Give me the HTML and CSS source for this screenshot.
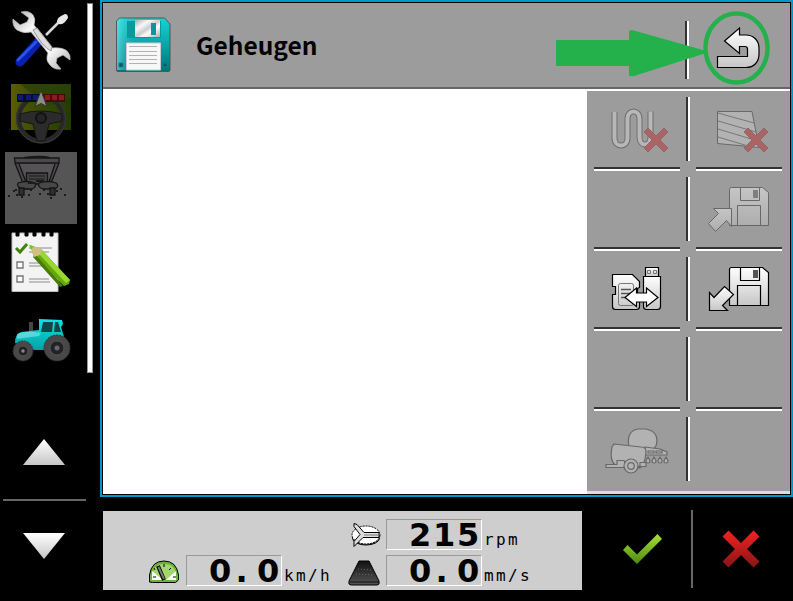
FILE: index.html
```html
<!DOCTYPE html>
<html lang="nl">
<head>
<meta charset="utf-8">
<title>Geheugen</title>
<link rel="stylesheet" href="styles.css">
</head>
<body>
<svg class="defs" width="0" height="0" aria-hidden="true">
  <defs>
    <linearGradient id="silver" x1="0" y1="0" x2="0" y2="1"><stop offset="0" stop-color="#fff"/><stop offset="1" stop-color="#c6c6c6"/></linearGradient>
    <linearGradient id="metal" x1="0" y1="0" x2="1" y2="1"><stop offset="0" stop-color="#aaa"/><stop offset=".3" stop-color="#f8f8f8"/><stop offset=".5" stop-color="#ccc"/><stop offset=".65" stop-color="#fff"/><stop offset="1" stop-color="#aaa"/></linearGradient>
    <linearGradient id="teal" x1="0" y1="0" x2="0" y2="1"><stop offset="0" stop-color="#16d3d6"/><stop offset="1" stop-color="#027478"/></linearGradient>
    <linearGradient id="body" x1="0" y1="0" x2="0" y2="1"><stop offset="0" stop-color="#05e6e6"/><stop offset="1" stop-color="#06a0a2"/></linearGradient>
    <linearGradient id="sheen" x1="0" y1="0" x2="1" y2="0"><stop offset="0" stop-color="#7ee" stop-opacity=".6"/><stop offset=".4" stop-color="#0aa" stop-opacity="0"/></linearGradient>
    <linearGradient id="green" x1="0" y1="0" x2="0" y2="1"><stop offset="0" stop-color="#a6e034"/><stop offset="1" stop-color="#4e8a10"/></linearGradient>
    <linearGradient id="red" x1="0" y1="0" x2="0" y2="1"><stop offset="0" stop-color="#f52222"/><stop offset="1" stop-color="#861515"/></linearGradient>
    <linearGradient id="field" x1="0" y1="0" x2="1" y2="0"><stop offset="0" stop-color="#5d5d02"/><stop offset=".3" stop-color="#435000"/><stop offset="1" stop-color="#223b00"/></linearGradient>
    <linearGradient id="belt" x1="0" y1="0" x2="0" y2="1"><stop offset="0" stop-color="#111"/><stop offset="1" stop-color="#555"/></linearGradient>
  </defs>
</svg>
<div class="terminal">
  <aside class="sidebar">
    <div class="apps">
      <nav class="app-list">
        <svg class="app" viewBox="5 0 72 72">
          <path d="M64 17 46 35" stroke="#d8d8d8" stroke-width="2.500"/>
          <path d="M57 22q0-4 4-6l4-2q3 0 3 4l-3 4q-3 3-6 2z" fill="#e8e8e8"/>
          <path d="M38 42 20 62" stroke="#0a1fac" stroke-width="9" stroke-linecap="round"/>
          <path d="M36 42 18 60" stroke="#2454ee" stroke-width="3" stroke-linecap="round"/>
          <path d="M21 12q8-2 12 3 3 4 1 10l18 23q10-1 15 3 4 4 3 9l-7-5-6 3-1 5 5 6q-7 1-11-4-5-5-2-12L31 32q-8 2-14-2-5-4-4-11l7 6 7-3 2-4z" fill="url(#metal)" stroke="#bbb" stroke-width=".7"/>
          <path d="m33 30 4-2 15 19-1 4q-8-4-18-21z" fill="#ddd" stroke="#999" stroke-width="1"/>
        </svg>
        <svg class="app" viewBox="5 76 72 72">
          <path d="M11 84h60v46H11z" fill="url(#field)"/>
          <path d="m20 84 28 22 23-8V84z" fill="#2c4108" opacity=".8"/>
          <circle cx="41" cy="118.500" r="22.500" fill="none" stroke="#282828" stroke-width="5"/>
          <circle cx="41" cy="118.500" r="24.500" fill="none" stroke="#3b3b3b" stroke-width="1"/>
          <path d="M20 114q20-6 42 0v7l-13 3-4 17h-8l-4-17-13-3z" fill="#2b2b2b" stroke="#151515"/>
          <circle cx="41" cy="118" r="5" fill="#242424" stroke="#111" stroke-width="2"/>
          <path d="M17 94h24v8H17z" fill="#050a35"/>
          <path d="M18 95h5v5h-5zm8 0h5v5h-5zm7 0h5v5h-5z" fill="#101a70"/>
          <path d="M41 94h24v8H41z" fill="#490707"/>
          <path d="M45 95h5v5h-5zm7 0h5v5h-5zm7 0h5v5h-5z" fill="#8a1a22"/>
          <path d="m41 90.500 6 16-6-3-6 3z" fill="#8a8a8a" stroke="#333"/>
        </svg>
        <svg class="app app--active" viewBox="5 152 72 72">
          <g stroke="#151515" stroke-width="1.300">
            <path d="M25 157.500q16-2 24 0v2H25z" fill="#333"/>
            <path d="M14.500 158H59v5l-8 20H23l-8-20z" fill="#4a484a"/>
            <path d="M15 163h44" /><path d="m19 164 7 18h23l6-18" fill="#555355"/>
            <path d="M26.500 173h21v11h-21z" fill="#454545"/>
            <path d="M29 176h16M29 179h16" stroke="#292929"/>
            <path d="M18 183q9-3 17 0 2 4-3 6H22q-6-3-4-6zm21 0q9-3 17 0 4 3-1 6H43q-6-2-4-6z" fill="#484848"/>
            <path d="M19 188h5v7h-5zm31 0h5v7h-5z" fill="#303030"/>
          </g>
          <path d="M28 182h7v2h-7zm8-2h8v2h-8zM8 195h2v2H8zm5-5h2v2h-2zm3 4h2v2h-2zm-1-5h2v2h-2zm11-1h2v2h-2zm2 6h2v2h-2zm2-5h2v2h-2zm9 4h2v2h-2zm4-4h2v2h-2zm4 4h2v2h-2zm9-3h2v2h-2zm4-2h2v2h-2zm4 6h2v2h-2zm-14 3h2v2h-2zm-29-1h2v2h-2z" fill="#1b1b1b"/>
        </svg>
        <svg class="app" viewBox="5 228 72 72">
          <path d="M12 233h46v58.500H12z" fill="#f3f3f3" stroke="#bbb"/>
          <path d="M16 232h3v4h-3zm9 0h3v4h-3zm8 0h3v4h-3zm9 0h3v4h-3zm8 0h3v4h-3z" fill="#000" stroke="#000"/>
          <path d="M29 248h23M29 252h20M29 263h20M29 266h20M29 279h20M29 282h21" stroke="#8c8c8c" stroke-width="1.200"/>
          <path d="M17 262h6v6h-6zm0 14h6v6h-6z" fill="#fff" stroke="#777" stroke-width="1.400"/>
          <path d="m16 248 4 4 7-8" fill="none" stroke="#41820b" stroke-width="3"/>
          <path d="m30 245 11 4 29 31-1 4-5 2-30-29z" fill="#66a80c"/>
          <path d="m41 249 29 31-4 3-28-30z" fill="#99d832"/>
          <path d="m33 257 2-3 28 32-3 1z" fill="#477c08"/>
          <path d="m30 245 12 4-2 6-6 2z" fill="#d2bd83"/><path d="m29 245 5 1.500-3 3z" fill="#56d51b"/>
        </svg>
        <svg class="app" viewBox="5 304 72 72">
          <path d="M29 322h4v10h-4z" fill="#454545"/>
          <path d="m39 319 23 1 1 4-2 3 4 13-10 10H34L15 343q0-9 6-11l18-2z" fill="url(#body)"/>
          <path d="M17 334q10-4 24-1l-2 3-22 3z" fill="#91e5e7" opacity=".6"/>
          <path d="M43 322h10l-1 10H41zm12 0h3l3 10h-7z" fill="#124545"/>
          <circle cx="23" cy="351" r="10" fill="#484848" stroke="#333" stroke-dasharray="2 1"/>
          <circle cx="23" cy="351" r="5" fill="#222" stroke="#555"/><circle cx="23" cy="351" r="1.700" fill="#888"/>
          <circle cx="57" cy="348" r="13" fill="#484848" stroke="#333" stroke-dasharray="2 1"/>
          <circle cx="57" cy="348" r="7" fill="#222" stroke="#555"/><circle cx="57" cy="348" r="2.500" fill="#667"/>
        </svg>
      </nav>
      <div class="scrollbar"></div>
    </div>
    <div class="pager">
      <svg class="pager-arrow" viewBox="0 0 42 26"><path d="M21 0 42 26H0z" fill="url(#silver)"/></svg>
      <div class="pager-rule"></div>
      <svg class="pager-arrow" viewBox="0 0 42 26"><path d="M0 0h42L21 26z" fill="url(#silver)"/></svg>
    </div>
  </aside>

  <div class="content">
    <main class="window">
      <header class="header">
        <svg class="disk" viewBox="115 16 56 57">
          <path d="m116.500 21 3-3h45l5.500 6v46q0 1.500-1.500 1.500H118q-1.500 0-1.500-1.500z" fill="url(#teal)" stroke="#555"/>
          <path d="m117 21 3-2.500h44l5 5V70h-52z" fill="url(#sheen)"/>
          <path d="M127 21h34v17h-34z" fill="#059b9c"/>
          <path d="M135 20h25v17h-25z" fill="url(#metal)"/><path d="M151 23h5v12h-5z" fill="#08979b"/>
          <path d="M126.500 43h34v27h-34z" fill="#f7f7f7" stroke="#ccc"/>
          <path d="M129 46.500h28M129 51.500h28M129 55.500h28M129 59.500h28M129 63.500h28" stroke="#b2b2b2" stroke-width="1.200"/>
          <path d="M119 63h4v4h-4zm44 0h4v4h-4z" fill="#045c61" stroke="#05888b"/>
        </svg>
        <h1 class="title">Geheugen</h1>
        <div class="rule-v header-rule"></div>
        <svg class="back" viewBox="715 25 46 46">
          <path d="m724.500 41 15-13V35H746c7 0 13 5 13 13v6c0 8-5 13.500-13 13.500h-28.500V56.500H747.500V49q0-2.500-2.500-2.500H739.500V53.500z" fill="url(#silver)" stroke="#000" stroke-width="1.200"/>
        </svg>
        <svg class="callout" viewBox="553 8 220 80">
          <path d="M556 41q0-1 1-1h72V32q0-2 3-2l71 20q5 2 0 4l-69 22q-5 1-5-1v-9h-72q-1 0-1-1z" fill="#24b14c"/>
          <ellipse cx="736.500" cy="48" rx="31" ry="34.500" fill="none" stroke="#24b14c" stroke-width="4.500"/>
        </svg>
      </header>
      <div class="workspace">
        <section class="canvas"></section>
        <section class="keys">
          <div class="key"><svg class="icon disabled" viewBox="587 91 99 76">
            <path d="M614.500 112v26c0 10 13 10 13 0v-19c0-10 12-10 12 0v18c0 10 11 10 11 0v-25.500" fill="none" stroke="#333" stroke-width="6"/>
            <path d="M614.500 112v26c0 10 13 10 13 0v-19c0-10 12-10 12 0v18c0 10 11 10 11 0v-25.500" fill="none" stroke="#ddd" stroke-width="4"/>
            <path d="m644 132 4-4 8 8 8-8 4 4-8 8 8 8-4 4-8-8-8 8-4-4 8-8z" fill="#c01518" stroke="#831f27"/>
          </svg></div>
          <div class="rule-v"></div>
          <div class="key"><svg class="icon disabled" viewBox="690 91 100 76">
            <path d="M717.500 111.500H752l7 36-41.500-4z" fill="#d2d2d2" stroke="#222"/>
            <path d="m718 113 36 10m-36-2 38 11m-38-3 40 12m-40-4 30 9" fill="none" stroke="#444"/>
            <path d="m744 132 4-4 8 8 8-8 4 4-8 8 8 8-4 4-8-8-8 8-4-4 8-8z" fill="#c01518" stroke="#831f27"/>
          </svg></div>

          <div class="key"></div><div class="rule-v"></div>
          <div class="key"><svg class="icon disabled" viewBox="690 171 100 76">
            <g fill="url(#silver)" stroke="#222"><path d="M729.500 189.500q0-2 2-2h31l6 5v33h-39z"/><path d="M740.500 187.500h19v13h-19zM737.500 205.500h23v20h-23z"/><path d="M713.500 208.500h18v18l-5-6-11 11-7-8 10-10z"/></g><path d="M753 190h5v8h-5z" fill="#555"/>
          </svg></div>

          <div class="key"><svg class="icon" viewBox="587 251 99 76">
            <g fill="url(#silver)" stroke="#000" stroke-width="1.200"><path d="M612.500 274.500h20l7 7v6l-2 1v6l2 1v11q0 3-3 3h-21q-3 0-3-3v-12h3v-8h-3z"/><path d="M645.500 267.500h13v9h-13z"/><path d="M643.500 276.500h17v30q0 3-3 3h-11q-3 0-3-3z"/></g>
            <rect x="618.500" y="283.500" width="15" height="22" rx="2" fill="none" stroke="#777"/>
            <path d="M621 289.500h10m-10 4h9m-9 4h6" stroke="#555" stroke-width="1.500"/>
            <path d="M647.500 270.500h3v3h-3zm6 0h3v3h-3z" fill="none" stroke="#777"/>
            <path d="m625 297.500 11.500-9.500v5h10v-5l11.500 9.500-11.500 9v-4.500h-10v4.500z" fill="#fff" stroke="#000" stroke-width="1.200"/>
          </svg></div>
          <div class="rule-v"></div>
          <div class="key"><svg class="icon" viewBox="690 251 100 76">
            <g fill="url(#silver)" stroke="#000" stroke-width="1.200"><path d="M729.500 269.500q0-2 2-2h31l6 5v33h-39z"/><path d="M740.500 267.500h19v13h-19zM737.500 285.500h23v20h-23z"/><path d="M709.500 292.500v18h18l-5-5 11-11-9-8-10.500 11z"/></g><path d="M753 270h5v8h-5z" fill="#555"/>
          </svg></div>

          <div class="key"></div><div class="rule-v"></div><div class="key"></div>

          <div class="key key--last"><svg class="icon disabled" viewBox="587 411 99 76">
            <g fill="#d2d2d2" stroke="#222" stroke-width="1.200">
              <path d="M629 447q-3-16 9-18h8q14 3 10 17l-5 6-20-3z"/>
              <path d="m645 447 15 2 7 3v3h-22z"/><path d="M648 451h6v2h-6zm8 0h6v2h-6z"/>
              <path d="m614 444 27 3q5 0 5 5-1 13-6 16l-23-2q-8-4-5-19z"/>
              <path d="M606 464.500h11v-4h7l3 6h19v-4h-6v5h-34z"/>
              <circle cx="631" cy="466" r="7"/><circle cx="631" cy="466" r="3.300"/>
              <path d="M648 457q-4 6 0 6t0-6zm6 0q-4 6 0 6t0-6zm6 0q-4 6 0 6t0-6zm6 0q-4 6 0 6t0-6z"/>
            </g>
          </svg></div>
          <div class="rule-v"></div><div class="key key--last"></div>
        </section>
      </div>
    </main>

    <footer class="footer">
      <section class="readouts">
        <div class="readout readout--disc">
          <svg class="readout-icon" viewBox="347 521 34 29">
            <ellipse cx="366" cy="538" rx="13.500" ry="7" fill="#888" stroke="#000"/><ellipse cx="366" cy="535" rx="14" ry="9" fill="#fff" stroke="#000" stroke-dasharray="2 1"/>
            <path d="m354 523.500 3 1 7 8h15v5h-16l-9 9v-5l6-7-6-8z" fill="#ddd" stroke="#000"/><path d="M364 535h15" stroke="#777"/>
          </svg>
          <div class="value">215</div><span class="unit unit--rpm">rpm</span>
        </div>
        <div class="readout readout--speed">
          <svg class="readout-icon" viewBox="147 557 34 29">
            <path d="M149.500 582v-7q2-14 14.500-14t14.500 14v5l-3 2.500h-23z" fill="#69b43d" stroke="#000"/>
            <path d="M152 580v-4q1-12 12-12t12 11v5z" fill="#a5d66b"/><path d="m152 571 11 9h-11zm24 0-10 9h10z" fill="#fff"/>
            <path d="m158 566 6 14" stroke="#000" stroke-width="4"/><path d="m158.500 567 5.500 12" stroke="#777" stroke-width="2"/><path d="M153 577h3m17 0h3m-12-13v3m7 1-2 2m-15-2 1 2" stroke="#000"/>
          </svg>
          <div class="value">0<span class="point">.</span>0</div><span class="unit">km/h</span>
        </div>
        <div class="readout readout--belt">
          <svg class="readout-icon" viewBox="347 557 34 29"><path d="M359 561h10l10 20q1 4-2 4h-26q-3 0-2-4z" fill="url(#belt)" stroke="#000"/><path d="M350 582h29" stroke="#111"/><path d="m358 569 13 1m-15 4 18 1" stroke="#666" stroke-dasharray="1 2"/></svg>
          <div class="value">0<span class="point">.</span>0</div><span class="unit">mm/s</span>
        </div>
      </section>
      <div class="confirm"><svg class="mark" viewBox="620 528 46 40"><path d="m623 550 4.500-5 9.500 9.500 20.500-20.500 4.500 5-25 25z" fill="url(#green)"/></svg></div>
      <div class="cancel"><svg class="mark" viewBox="718 528 46 40"><path d="m722.500 536.500 6-6 12.500 12.500 12.500-12.500 6 6L747 549l12.500 12.500-6 6L741 555l-12.500 12.500-6-6L735 549z" fill="url(#red)"/></svg></div>
    </footer>
  </div>
</div>
</body>
</html>
```
FILE: styles.css
```css
*, *::after { box-sizing: border-box; }
body { margin: 0; background: #000; overflow: hidden; }
svg { display: block; }
.defs { position: absolute; }
.terminal { display: flex; width: 793px; height: 601px; background: #000; }

.sidebar { width: 100px; display: flex; flex-direction: column; }
.apps { display: flex; height: 376px; padding-left: 5px; gap: 10px; }
.app-list { display: flex; flex-direction: column; gap: 4px; width: 72px; }
.app { width: 72px; height: 72px; }
.app--active { background: #555; }
.scrollbar { width: 6px; height: 370px; margin-top: 3px; background: #fff; border: 1px solid #999; border-top-color: #777; }
.pager { display: flex; flex-direction: column; align-items: center; width: 83px; margin: 63px 0 0 3px; }
.pager-arrow { width: 42px; height: 26px; margin-right: 1px; }
.pager-rule { width: 83px; height: 2px; margin: 34px 0 32px; background: #666; }

.content { width: 693px; display: flex; flex-direction: column; }
.window { height: 497px; border: 2px solid #0097d0; outline: 1px solid #000; outline-offset: -3px; padding: 1px; background: #fff; }
.header { position: relative; display: flex; height: 86px; background: #9c9c9c; border-bottom: 2px solid #666; }
.disk { width: 56px; height: 57px; margin: 13px 0 0 12px; }
.title { width: 490px; margin: 22px 0 0 25px; font: bold 24.5px/40px "Noto Sans CJK SC", "Noto Sans", sans-serif; color: #000; }
.rule-v { width: 4px; height: 64px; margin-top: 6px; background: #333; border-right: 2px solid #fff; }
.header-rule { height: 58px; margin: 18px 0 0 -1px; }
.back { width: 46px; height: 46px; margin: 22px 0 0 26px; }
.callout { position: absolute; left: 450px; top: 5px; width: 220px; height: 80px; }
.workspace { display: flex; height: 405px; }
.canvas { width: 484px; background: #fff; }
.keys { width: 203px; height: 403px; margin-top: 2px; display: grid; grid-template-columns: 99px 4px 100px; grid-template-rows: repeat(5, 80px); background: #9c9c9c; border-bottom: 3px solid #ddd; }
.key { display: flex; flex-direction: column; height: 80px; }
.key::after { content: ""; width: 86px; height: 4px; margin: auto 0 0 7px; flex: none; background: #333; border-bottom: 2px solid #fff; }
.key:nth-child(3n)::after { margin-left: 6px; }
.key--last::after { display: none; }
.icon { width: 100%; height: 76px; flex: none; }
.disabled { opacity: .42; }

.footer { display: flex; height: 104px; }
.readouts { width: 479px; height: 79px; margin: 14px 0 0 3px; padding-top: 8px; background: #cecece; display: grid; grid-template-columns: 200px 279px; grid-template-rows: 36px 32px; }
.readout { display: flex; height: 31px; padding-left: 44px; }
.readout--disc { grid-column: 2; }
.readout--speed { grid-column: 1; }
.readout-icon { width: 34px; height: 29px; margin-top: 2px; flex: none; }
.value { display: flex; justify-content: flex-end; width: 96px; height: 31px; margin-left: 5px; flex: none; border: 1px solid; border-color: #999 #fff #fff #999; font: bold 32px/30px "DejaVu Sans", sans-serif; letter-spacing: 1.7px; color: #000; }
.point { width: 24px; padding-right: 5px; text-align: center; }
.unit { margin: 9px 0 0 2px; font: 16px/24px "DejaVu Sans Mono", monospace; letter-spacing: 2.4px; color: #000; white-space: nowrap; }
.confirm { width: 111px; height: 78px; margin-top: 13px; padding: 18px 0 0 38px; border-right: 2px solid #666; }
.cancel { padding: 31px 0 0 25px; }
.mark { width: 46px; height: 40px; }
```
